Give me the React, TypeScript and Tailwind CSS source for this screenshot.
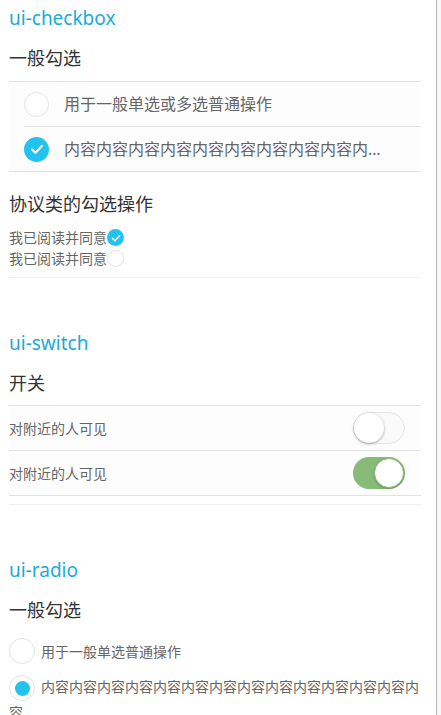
const FONT = { fontFamily: '"Noto Sans", "Noto Sans CJK SC", sans-serif' };

const Check = ({ size }: { size: number }) => (
  <svg width={size} height={size} viewBox="0 0 24 24" fill="none">
    <path d="M6.5 12.5l3.8 3.6 7.2-7.6" stroke="#fff" strokeWidth="2.2" strokeLinecap="round" strokeLinejoin="round" />
  </svg>
);

const CheckCircle = ({ checked, size }: { checked: boolean; size: "lg" | "sm" }) => {
  const dim = size === "lg" ? "h-[25px] w-[25px]" : "h-[17px] w-[17px]";
  return checked ? (
    <span className={`flex ${dim} shrink-0 items-center justify-center rounded-full bg-[#22c3ef]`}>
      <Check size={size === "lg" ? 22 : 16} />
    </span>
  ) : (
    <span className={`block ${dim} shrink-0 rounded-full border border-[#e3e3e3] bg-white`} />
  );
};

const Switch = ({ on }: { on: boolean }) =>
  on ? (
    <span className="flex h-[32px] w-[52px] items-center justify-end rounded-full bg-[#88bb77] pr-[1px]">
      <span className="h-[30px] w-[30px] rounded-full border border-[#88bb77] bg-white shadow-[0_1px_2px_rgba(0,0,0,0.25)]" />
    </span>
  ) : (
    <span className="flex h-[32px] w-[52px] items-center rounded-full border border-[#e6e6e6] bg-[#fafafa]">
      <span className="h-[30px] w-[30px] rounded-full bg-white shadow-[0_1px_3px_rgba(0,0,0,0.35)]" />
    </span>
  );

const Title = ({ children }: { children: string }) => (
  <div className="flex h-[36px] items-center text-[19px] text-[#1aabd9]">{children}</div>
);

const Heading = ({ children }: { children: string }) => (
  <div className="flex h-[45px] items-center text-[18px] text-[#333]">{children}</div>
);

export default function App() {
  return (
    <div className="flex min-h-[715px] bg-[#f7f7f7]" style={FONT}>
      <div className="w-[437px] border-r border-[#b5b5b5] bg-white pl-[9px] pr-[15px]">
        {/* checkbox */}
        <section className="border-b border-[#eeeeee] pb-[8px]">
          <Title>ui-checkbox</Title>
          <Heading>一般勾选</Heading>
          <div className="border-y border-[#e2e2e2] bg-[#fdfdfd] pl-[15px]">
            <div className="flex h-[45px] items-center gap-[15px] border-b border-[#e2e2e2] text-[16px] text-[#666]">
              <CheckCircle checked={false} size="lg" />
              <span>用于一般单选或多选普通操作</span>
            </div>
            <div className="flex h-[44px] items-center gap-[15px] pr-[38px] text-[16px] text-[#666]">
              <CheckCircle checked size="lg" />
              <span className="truncate">内容内容内容内容内容内容内容内容内容内容内容内容</span>
            </div>
          </div>
          <div className="mt-[10px] flex h-[45px] items-center text-[18px] text-[#333]">协议类的勾选操作</div>
          <div className="flex h-[21px] items-center text-[14px] text-[#666]">
            <span>我已阅读并同意</span>
            <CheckCircle checked size="sm" />
          </div>
          <div className="flex h-[21px] items-center text-[14px] text-[#666]">
            <span>我已阅读并同意</span>
            <CheckCircle checked={false} size="sm" />
          </div>
        </section>

        {/* switch */}
        <section className="mt-[47px] border-b border-[#eeeeee] pb-[8px]">
          <Title>ui-switch</Title>
          <div className="flex h-[44px] items-center text-[18px] text-[#333]">开关</div>
          <div className="border-t border-[#e2e2e2] bg-[#fdfdfd]">
            {[false, true].map((on) => (
              <div
                key={String(on)}
                className="flex h-[45px] items-center justify-between border-b border-[#e2e2e2] pr-[16px] text-[14px] text-[#666]"
              >
                <span>对附近的人可见</span>
                <Switch on={on} />
              </div>
            ))}
          </div>
        </section>

        {/* radio */}
        <section className="mt-[47px]">
          <Title>ui-radio</Title>
          <div className="flex h-[44px] items-center text-[18px] text-[#333]">一般勾选</div>
          <div className="mt-[6px] flex items-center gap-[6px] text-[14px] text-[#666]">
            <span className="block h-[26px] w-[26px] rounded-full border border-[#e3e3e3] bg-white" />
            <span>用于一般单选普通操作</span>
          </div>
          <div className="mt-[11px] text-[14px] leading-[24px] text-[#666]">
            <span className="mr-[6px] inline-flex h-[26px] w-[26px] items-center justify-center rounded-full border border-[#e3e3e3] bg-white align-middle">
              <span className="h-[15px] w-[15px] rounded-full bg-[#22c3ef]" />
            </span>
            内容内容内容内容内容内容内容内容内容内容内容内容内容内容
          </div>
        </section>
      </div>
    </div>
  );
}
